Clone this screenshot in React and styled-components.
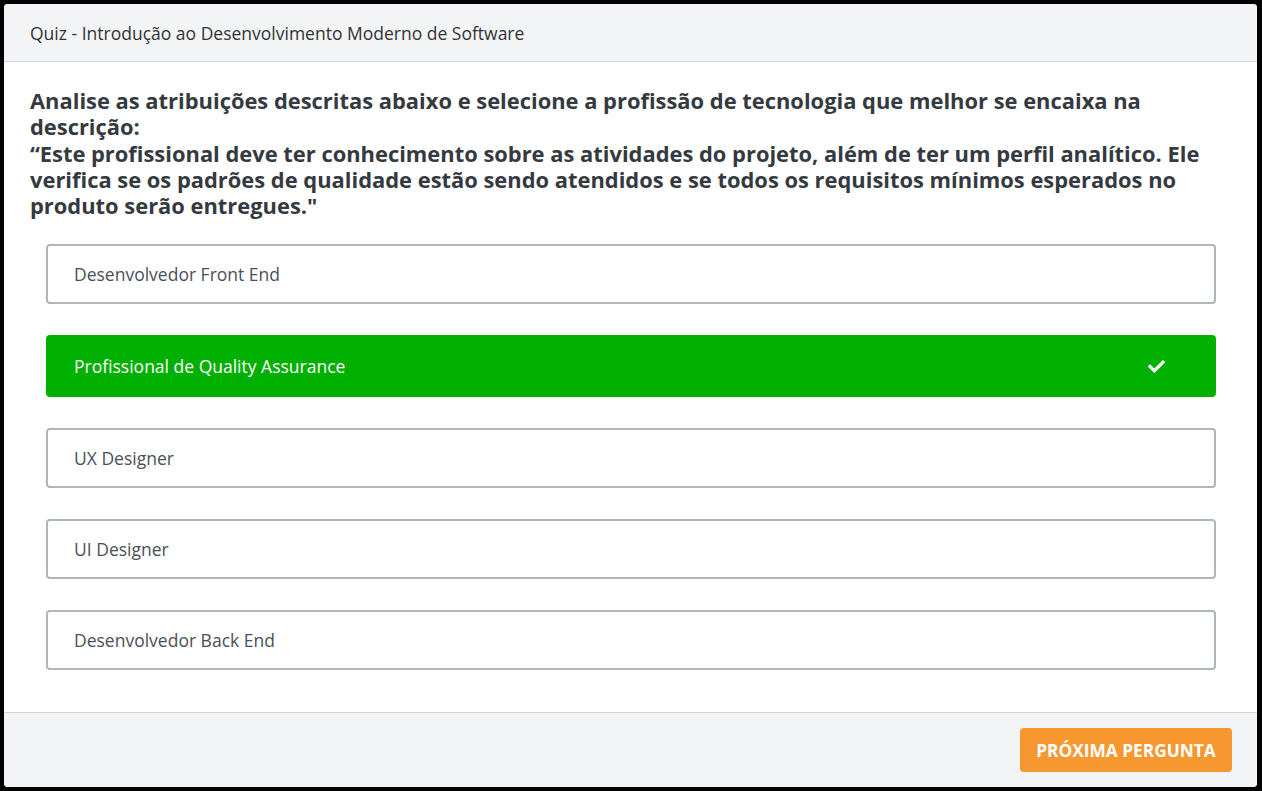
import styled, { createGlobalStyle } from "styled-components";
import { FaCheck } from "react-icons/fa";

const GlobalStyle = createGlobalStyle`
  html, body {
    margin: 0;
    padding: 0;
    background: #000;
  }
  body {
    font-family: "Open Sans", "Noto Sans", sans-serif;
  }
  * {
    box-sizing: border-box;
  }
`;

const options = [
  { id: 1, label: "Desenvolvedor Front End" },
  { id: 2, label: "Profissional de Quality Assurance", correct: true },
  { id: 3, label: "UX Designer" },
  { id: 4, label: "UI Designer" },
  { id: 5, label: "Desenvolvedor Back End" },
];

function App() {
  return (
    <>
      <GlobalStyle />
      <S.Card>
        <S.Header>Quiz - Introdução ao Desenvolvimento Moderno de Software</S.Header>
        <S.Body>
          <S.Question>
            Analise as atribuições descritas abaixo e selecione a profissão de
            tecnologia que melhor se encaixa na descrição:
            <br />
            “Este profissional deve ter conhecimento sobre as atividades do
            projeto, além de ter um perfil analítico. Ele verifica se os
            padrões de qualidade estão sendo atendidos e se todos os requisitos
            mínimos esperados no produto serão entregues."
          </S.Question>
          <S.Options>
            {options.map((opt) => (
              <S.Option key={opt.id} $selected={opt.correct}>
                <span>{opt.label}</span>
                {opt.correct && <FaCheck size={17} />}
              </S.Option>
            ))}
          </S.Options>
        </S.Body>
        <S.Footer>
          <S.NextButton>Próxima pergunta</S.NextButton>
        </S.Footer>
      </S.Card>
    </>
  );
}
export default App;

const Card = styled.div`
  margin: 4px 5px 4px 4px;
  background-color: white;
  border-radius: 4px;
  overflow: hidden;
  display: flex;
  flex-direction: column;
`;

const Header = styled.div`
  height: 58px;
  padding: 0 26px;
  display: flex;
  align-items: center;
  background-color: #f3f4f6;
  border-bottom: 1px solid #d3d6da;
  color: #333;
  font-size: 17.5px;
`;

const Body = styled.div`
  padding: 26px 26px 42px;
`;

const Question = styled.p`
  margin: 0;
  color: #343a40;
  font-size: 21.9px;
  font-weight: 700;
  line-height: 26.3px;
`;

const Options = styled.div`
  margin: 25px 15px 0 16px;
  display: flex;
  flex-direction: column;
  gap: 31px;
`;

const Option = styled.div`
  height: ${(p) => (p.$selected ? "62px" : "60px")};
  padding: 0 49px 0 26px;
  display: flex;
  align-items: center;
  justify-content: space-between;
  border-radius: 4px;
  border: 2px solid ${(p) => (p.$selected ? "#00b000" : "#adb5bd")};
  background-color: ${(p) => (p.$selected ? "#00b000" : "white")};
  color: ${(p) => (p.$selected ? "white" : "#495057")};
  font-size: 17.5px;
  cursor: pointer;
`;

const Footer = styled.div`
  height: 75px;
  padding: 0 25px;
  display: flex;
  align-items: center;
  justify-content: flex-end;
  background-color: #f3f4f6;
  border-top: 1px solid #d3d6da;
`;

const NextButton = styled.button`
  width: 212px;
  height: 44px;
  border: none;
  border-radius: 4px;
  background-color: #f7972f;
  color: white;
  font-family: "Open Sans", "Noto Sans", sans-serif;
  font-size: 17.3px;
  font-weight: 700;
  text-transform: uppercase;
  cursor: pointer;
`;

const S = {
  Card,
  Header,
  Body,
  Question,
  Options,
  Option,
  Footer,
  NextButton,
};
